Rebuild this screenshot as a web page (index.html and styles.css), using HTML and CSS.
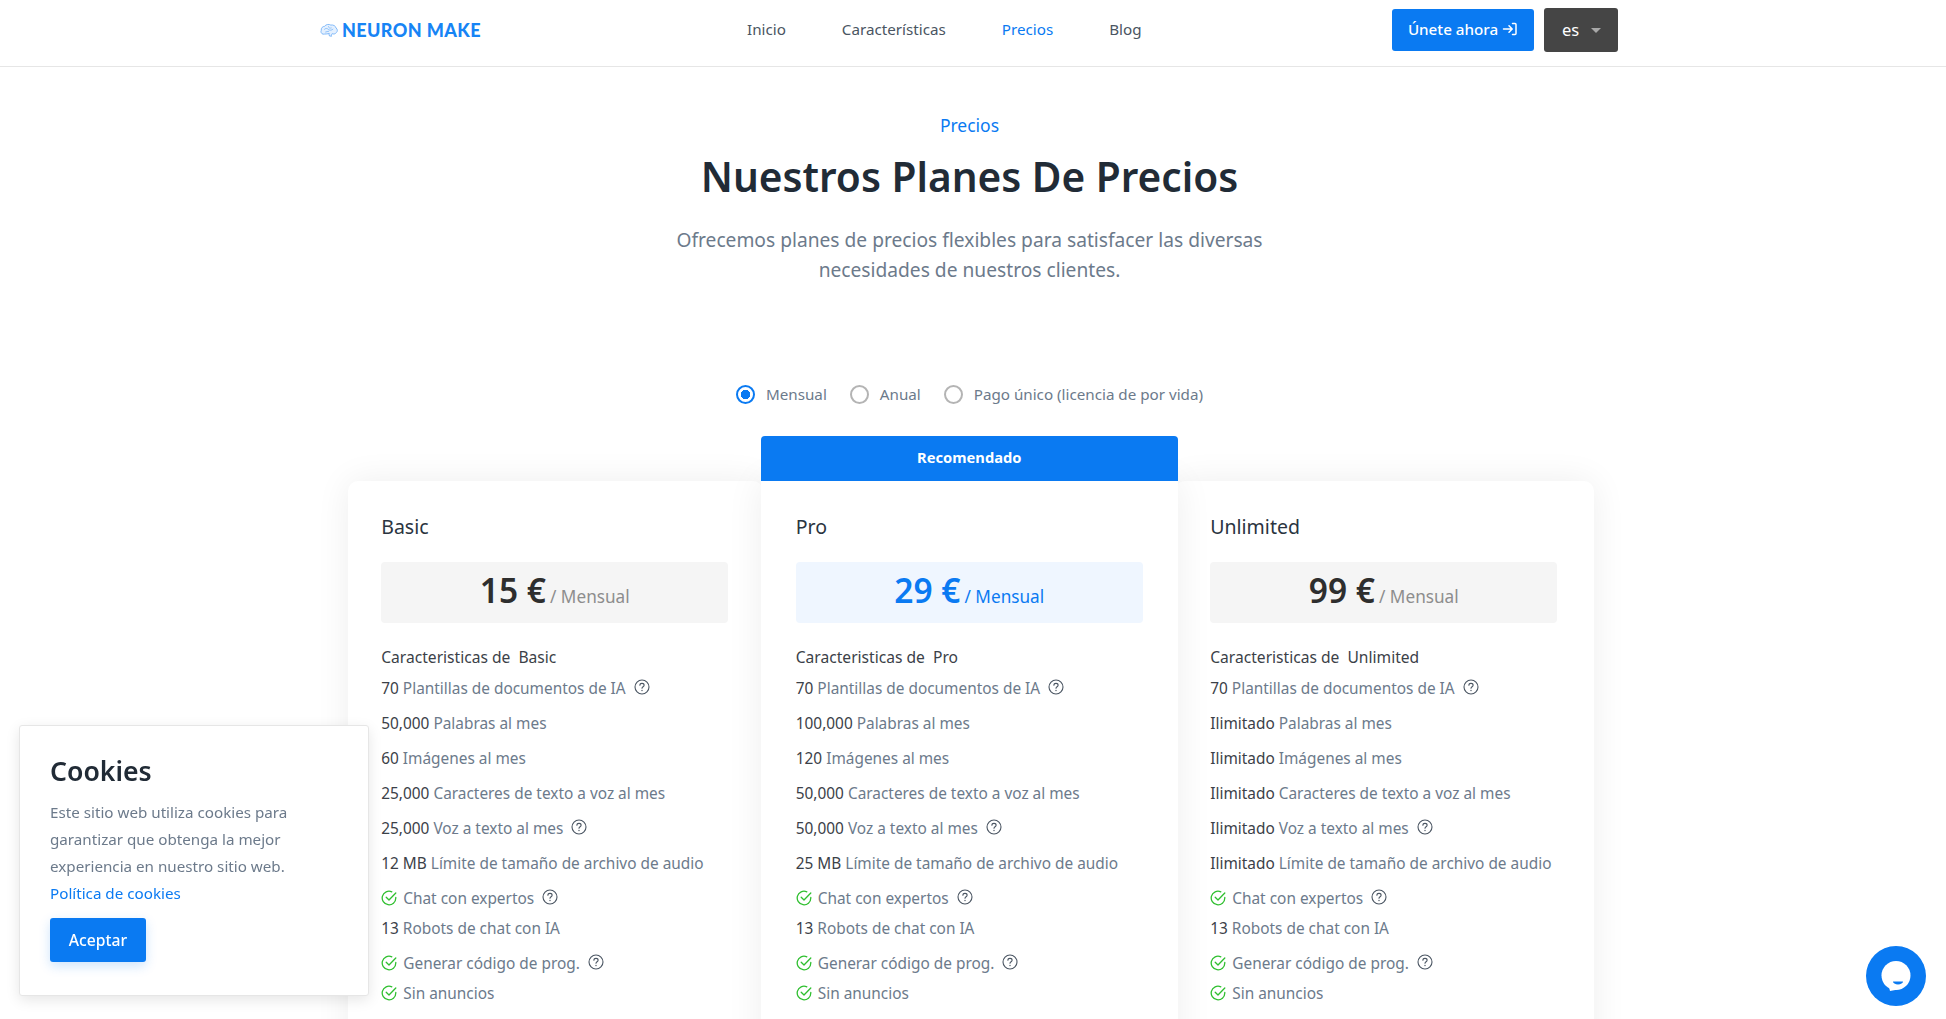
FILE: index.html
```html
<!DOCTYPE html>
<html lang="es">
<head>
<meta charset="utf-8">
<title>Neuron Make - Precios</title>
<link rel="stylesheet" href="styles.css">
</head>
<body>
<svg class="defs" width="0" height="0" aria-hidden="true">
  <symbol id="q" viewBox="0 0 16 16"><circle cx="8" cy="8" r="7" fill="none" stroke="currentColor" stroke-width="1.1"/><path d="M5.900 6.300c0-1.100 .9-1.900 2.100-1.900s2.100 .8 2.100 1.800c0 1.500-2.100 1.500-2.100 3.100" fill="none" stroke="currentColor" stroke-width="1.1" stroke-linecap="round"/><circle cx="8" cy="11.500" r=".7" fill="currentColor"/></symbol>
  <symbol id="c" viewBox="0 0 16 16"><path d="M14.800 7.400v.6a6.800 6.800 0 1 1-4-6.200" fill="none" stroke="currentColor" stroke-width="1.300" stroke-linecap="round"/><path d="M5.200 7.200 8 10l6.800-7" fill="none" stroke="currentColor" stroke-width="1.300" stroke-linecap="round" stroke-linejoin="round"/></symbol>
</svg>
<header class="topbar">
  <div class="topbar-inner">
    <a class="logo" href="#">
      <svg class="logo-mark" viewBox="0 0 18 13"><path d="M3 10.500C1 10 .5 8 1.200 6.800.8 4.600 2.600 3 4.400 3 5.600 1 8.600 .8 10.200 1.800c2.400-.4 4.600 .8 5 2.800 1.600 1 1.600 3.400 .2 4.400-.8 1.400-2.800 1.600-4 1-.6 .8-.8 1.400-.4 2.400l-2-.2c-.4-1-.6-1.600-.2-2.400-1.400 .4-4 .6-5.800 .6Z" fill="#e4f0fe" stroke="#6fb0f8" stroke-width=".8"/><path d="M4 6c1.500-1.500 3-1 4 0s3 1 4.500-.5M5 8.500c1.500 0 2-1 3.500-.8M8 3c0 1.500 1.500 2 3 1.500" fill="none" stroke="#6fb0f8" stroke-width=".7"/></svg>
      <span class="logo-text">NEURON MAKE</span>
    </a>
    <nav class="menu">
      <a href="#">Inicio</a>
      <a href="#">Características</a>
      <a class="active" href="#">Precios</a>
      <a href="#">Blog</a>
    </nav>
    <div class="actions">
      <a class="btn join" href="#">Únete ahora
        <svg class="login" viewBox="0 0 16 16"><path d="M1.500 8h8.500M7 4.800 10.200 8 7 11.200M10.500 2.500h2.500a1 1 0 0 1 1 1v9a1 1 0 0 1-1 1h-2.500" fill="none" stroke="currentColor" stroke-width="1.500" stroke-linecap="round" stroke-linejoin="round"/></svg>
      </a>
      <button class="lang">es<span class="caret"></span></button>
    </div>
  </div>
</header>
<main>
  <section class="hero">
    <p class="eyebrow">Precios</p>
    <h1>Nuestros Planes De Precios</h1>
    <p class="lead">Ofrecemos planes de precios flexibles para satisfacer las diversas necesidades de nuestros clientes.</p>
  </section>
  <div class="periods">
    <label class="period"><span class="radio on"></span>Mensual</label>
    <label class="period"><span class="radio"></span>Anual</label>
    <label class="period"><span class="radio"></span>Pago único (licencia de por vida)</label>
  </div>
  <section class="plans">
    <article class="plan">
      <h2>Basic</h2>
      <div class="price"><strong>15 €</strong> <span>/ Mensual</span></div>
      <p class="feat-title">Caracteristicas de&nbsp; Basic</p>
      <ul class="feats">
        <li><b>70</b> Plantillas de documentos de IA <svg class="qi"><use href="#q"/></svg></li>
        <li><b>50,000</b> Palabras al mes</li>
        <li><b>60</b> Imágenes al mes</li>
        <li><b>25,000</b> Caracteres de texto a voz al mes</li>
        <li><b>25,000</b> Voz a texto al mes <svg class="qi"><use href="#q"/></svg></li>
        <li><b>12 MB</b> Límite de tamaño de archivo de audio</li>
        <li class="chk"><svg class="ci"><use href="#c"/></svg>Chat con expertos <svg class="qi"><use href="#q"/></svg></li>
        <li><b>13</b> Robots de chat con IA</li>
        <li class="chk"><svg class="ci"><use href="#c"/></svg>Generar código de prog. <svg class="qi"><use href="#q"/></svg></li>
        <li class="chk"><svg class="ci"><use href="#c"/></svg>Sin anuncios</li>
      </ul>
    </article>
    <article class="plan featured">
      <div class="ribbon">Recomendado</div>
      <h2>Pro</h2>
      <div class="price"><strong>29 €</strong> <span>/ Mensual</span></div>
      <p class="feat-title">Caracteristicas de&nbsp; Pro</p>
      <ul class="feats">
        <li><b>70</b> Plantillas de documentos de IA <svg class="qi"><use href="#q"/></svg></li>
        <li><b>100,000</b> Palabras al mes</li>
        <li><b>120</b> Imágenes al mes</li>
        <li><b>50,000</b> Caracteres de texto a voz al mes</li>
        <li><b>50,000</b> Voz a texto al mes <svg class="qi"><use href="#q"/></svg></li>
        <li><b>25 MB</b> Límite de tamaño de archivo de audio</li>
        <li class="chk"><svg class="ci"><use href="#c"/></svg>Chat con expertos <svg class="qi"><use href="#q"/></svg></li>
        <li><b>13</b> Robots de chat con IA</li>
        <li class="chk"><svg class="ci"><use href="#c"/></svg>Generar código de prog. <svg class="qi"><use href="#q"/></svg></li>
        <li class="chk"><svg class="ci"><use href="#c"/></svg>Sin anuncios</li>
      </ul>
    </article>
    <article class="plan">
      <h2>Unlimited</h2>
      <div class="price"><strong>99 €</strong> <span>/ Mensual</span></div>
      <p class="feat-title">Caracteristicas de&nbsp; Unlimited</p>
      <ul class="feats">
        <li><b>70</b> Plantillas de documentos de IA <svg class="qi"><use href="#q"/></svg></li>
        <li><b>Ilimitado</b> Palabras al mes</li>
        <li><b>Ilimitado</b> Imágenes al mes</li>
        <li><b>Ilimitado</b> Caracteres de texto a voz al mes</li>
        <li><b>Ilimitado</b> Voz a texto al mes <svg class="qi"><use href="#q"/></svg></li>
        <li><b>Ilimitado</b> Límite de tamaño de archivo de audio</li>
        <li class="chk"><svg class="ci"><use href="#c"/></svg>Chat con expertos <svg class="qi"><use href="#q"/></svg></li>
        <li><b>13</b> Robots de chat con IA</li>
        <li class="chk"><svg class="ci"><use href="#c"/></svg>Generar código de prog. <svg class="qi"><use href="#q"/></svg></li>
        <li class="chk"><svg class="ci"><use href="#c"/></svg>Sin anuncios</li>
      </ul>
    </article>
  </section>
</main>
<aside class="cookies">
  <h3>Cookies</h3>
  <p>Este sitio web utiliza cookies para garantizar que obtenga la mejor experiencia en nuestro sitio web.</p>
  <a class="policy" href="#">Política de cookies</a>
  <button class="btn accept">Aceptar</button>
</aside>
<button class="chat" aria-label="Chat">
  <svg viewBox="0 0 30 30" width="30" height="30"><circle cx="15" cy="14.500" r="14.500" fill="#fff"/><path d="M8 26 9 30l8-1.500Z" fill="#fff"/><path d="M12 20.500h10a5 3 0 0 1-10 0Z" fill="#0a7af2"/></svg>
</button>
</body>
</html>
```
FILE: styles.css
```css
* { box-sizing: border-box; }
html, body { height: 100%; overflow: hidden; }
body {
  margin: 0;
  background: #fff;
  color: #6c7a8b;
  font: 400 15.400px/24px "Noto Sans", "Open Sans", sans-serif;
}
a { text-decoration: none; color: inherit; }
h1, h2, h3, p, ul { margin: 0; padding: 0; }
.defs { position: absolute; }

.topbar { height: 67px; border-bottom: 1px solid #e6e6e6; }
.topbar-inner {
  width: 1298px;
  height: 66px;
  margin-left: 320px;
  padding-bottom: 6px;
  display: flex;
  align-items: center;
}
.logo { display: flex; align-items: center; gap: 3px; width: 427px; }
.logo-mark { width: 19px; height: 14px; }
.logo-text {
  color: #1784f5;
  font: 900 18px/1 "Lato", sans-serif;
  letter-spacing: .4px;
}
.menu { display: flex; gap: 56px; margin-bottom: 2px; color: #4a5562; font-size: 15.200px; }
.menu .active { color: #0a7af2; }
.actions { margin-left: auto; display: flex; gap: 10px; align-items: center; }
.btn {
  border: 0;
  border-radius: 3px;
  background: #0a7af2;
  color: #fff;
  font: inherit;
}
.join {
  width: 142px;
  height: 42px;
  padding-bottom: 2px;
  display: flex;
  align-items: center;
  justify-content: center;
  gap: 4px;
  font-weight: 500;
  font-size: 15.200px;
}
.login { width: 16px; height: 16px; }
.lang {
  width: 74px;
  height: 44px;
  border: 0;
  border-radius: 3px;
  background: #454545;
  color: #fff;
  font: inherit;
  font-size: 16.500px;
  display: flex;
  align-items: center;
  padding: 0 17px 0 18px;
  justify-content: space-between;
}
.caret { width: 0; height: 0; border: 5px solid transparent; border-top-color: #a8a8a8; border-bottom: 0; }

.hero { text-align: center; padding: 46px 7px 0 0; }
.eyebrow { color: #0a7af2; font-size: 17.500px; }
h1 { margin-top: 15px; color: #212b36; font-size: 40.600px; line-height: 50px; font-weight: 600; }
.lead { width: 610px; margin: 23px auto 0; font-size: 19.200px; line-height: 30px; }

.periods { margin-top: 97px; display: flex; justify-content: center; gap: 23px; padding-right: 7px; font-size: 15.200px; }
.period { display: flex; align-items: center; gap: 11px; }
.radio { width: 19px; height: 19px; border-radius: 50%; border: 2px solid #b4b4b4; }
.radio.on { border-color: #0a7af2; background: radial-gradient(circle, #0a7af2 0 4.500px, #fff 5px); }

.plans {
  width: 1243.500px;
  margin: 75px 0 0 347.500px;
  display: grid;
  grid-template-columns: repeat(3, 414.500px);
}
.plan {
  position: relative;
  margin: 0 -1.250px;
  padding: 33px 35px 40px;
  height: 700px;
  background: #fff;
  border-radius: 10px;
  box-shadow: 0 0 35px rgba(0, 0, 0, .07);
}
.plan:first-child { margin-left: 0; padding-left: 33.750px; }
.plan:last-child { margin-right: -2.500px; padding-right: 36.250px; }
.plan.featured { z-index: 1; border-radius: 0; }
.ribbon {
  position: absolute;
  left: 0;
  right: 0;
  bottom: 100%;
  height: 45px;
  background: #0a7af2;
  border-radius: 4px 4px 0 0;
  color: #fff;
  font-weight: 700;
  font-size: 14.700px;
  line-height: 43px;
  text-align: center;
}
h2 { color: #2a3440; font-size: 19.500px; line-height: 26px; font-weight: 400; }
.price {
  margin-top: 22px;
  height: 61px;
  background: #f5f5f5;
  border-radius: 4px;
  display: flex;
  align-items: baseline;
  justify-content: center;
  gap: 4px;
  color: #8d8d8d;
  font-size: 17.200px;
  padding-top: 5px;
}
.price strong { color: #2e2e2e; font-size: 33.500px; line-height: 46px; font-weight: 600; }
.featured .price { background: #eff6ff; color: #0a7af2; }
.featured .price strong { color: #0a7af2; }
.feat-title { margin-top: 22px; color: #3b4148; font-size: 15.600px; line-height: 24px; }
.feats { list-style: none; margin-top: 8px; }
.feats li { height: 35px; white-space: nowrap; }
.feats li.chk { height: 30px; display: flex; align-items: flex-start; }
.feats b { font-weight: 400; color: #3b4148; }
.qi { width: 16px; height: 16px; margin-left: 4px; color: #4a5562; vertical-align: -1px; }
.ci { width: 16px; height: 16px; margin: 3px 6px 0 0; color: #2fbf2f; flex: none; }
.chk .qi { margin: 2px 0 0 8px; }

.cookies {
  position: fixed;
  left: 19px;
  top: 725px;
  width: 350px;
  height: 271px;
  padding: 30px;
  background: #fff;
  border: 1px solid #e6e6e6;
  border-radius: 3px;
  box-shadow: 0 4px 14px rgba(0, 0, 0, .1);
  z-index: 5;
}
.cookies h3 { color: #212b36; font-size: 26.600px; line-height: 30px; font-weight: 600; margin-bottom: 13px; }
.cookies p { font-size: 15.200px; line-height: 27px; }
.policy { display: block; color: #0a7af2; font-size: 15.200px; line-height: 27px; }
.accept {
  display: block;
  margin-top: 11px;
  width: 96px;
  height: 44px;
  font-size: 15.700px;
  font-weight: 500;
  box-shadow: 0 4px 12px rgba(10, 122, 242, .2);
}
.chat {
  position: fixed;
  left: 1866px;
  top: 946px;
  width: 60px;
  height: 60px;
  border: 0;
  border-radius: 50%;
  background: #0a7af2;
  padding: 0;
  display: flex;
  align-items: center;
  justify-content: center;
  z-index: 5;
}
```
